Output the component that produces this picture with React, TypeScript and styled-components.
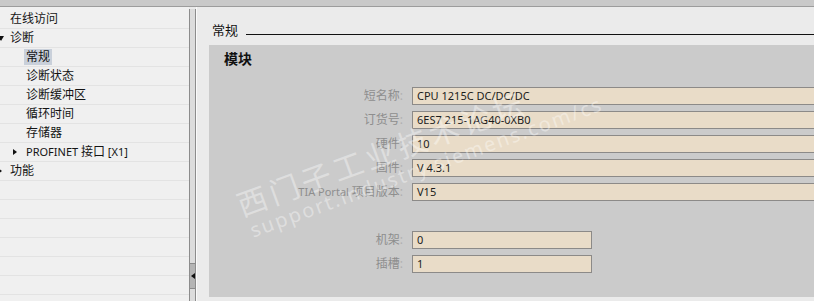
import React from "react";
import styled, { createGlobalStyle } from "styled-components";

const Global = createGlobalStyle`
  html, body { margin: 0; padding: 0; }
  body {
    width: 814px; height: 301px; overflow: hidden;
    background: #ebebeb;
    font-family: "Noto Sans", "Noto Sans CJK SC", sans-serif;
  }
`;

const Page = styled.div`
  position: relative;
  width: 814px;
  height: 301px;
  display: flex;
  flex-direction: column;
  overflow: hidden;
`;

const TopBand = styled.div`
  height: 6px;
  background: #c9c9c9;
  border-bottom: 1px solid #9c9c9c;
  flex: none;
`;

const Main = styled.div`
  flex: 1;
  display: flex;
  min-height: 0;
`;

const Tree = styled.div`
  width: 189px;
  flex: none;
  background: #f0f0f0;
  padding-top: 3px;
  overflow: hidden;
`;

const Row = styled.div<{ $indent: number }>`
  position: relative;
  height: 18px;
  border-bottom: 1px solid #e3e3e3;
  display: flex;
  align-items: center;
  padding-left: ${(p) => p.$indent}px;
  font-size: 12px;
  color: #141414;
  white-space: nowrap;
`;

const Label = styled.span<{ $selected?: boolean }>`
  padding: 0 2px;
  line-height: 16px;
  background: ${(p) => (p.$selected ? "#c9d0da" : "transparent")};
  margin-left: -2px;
`;

const Latin = styled.span`
  font-size: 11px;
`;

const Twisty = styled.span<{ $x: number; $open?: boolean }>`
  position: absolute;
  left: ${(p) => p.$x}px;
  top: 6px;
  width: 0;
  height: 0;
  ${(p) =>
    p.$open
      ? `border-left: 3.5px solid transparent; border-right: 3.5px solid transparent; border-top: 5px solid #111; top: 7px;`
      : `border-top: 3.5px solid transparent; border-bottom: 3.5px solid transparent; border-left: 4px solid #111;`}
`;

const Splitter = styled.div`
  width: 5px;
  flex: none;
  margin-top: 2px;
  background: #dcdcdc;
  border-left: 1px solid #8c8c8c;
  border-right: 1px solid #8c8c8c;
  display: flex;
  flex-direction: column;
  justify-content: flex-end;
  padding-bottom: 12px;
`;

const Grip = styled.div`
  height: 24px;
  background: #b4b4b4;
  border-top: 1px solid #8a8a8a;
  border-bottom: 1px solid #8a8a8a;
  display: flex;
  align-items: center;
  justify-content: center;
  &::after {
    content: "";
    border-top: 3px solid transparent;
    border-bottom: 3px solid transparent;
    border-right: 4px solid #111;
  }
`;

const Gap = styled.div`
  width: 1px;
  flex: none;
  background: #fafafa;
`;

const Content = styled.div`
  flex: 1;
  display: flex;
  flex-direction: column;
  background: #ebebeb;
  padding-left: 12px;
  min-width: 0;
`;

const SectionTitle = styled.div`
  height: 38px;
  display: flex;
  align-items: flex-start;
  padding-top: 13px;
  box-sizing: border-box;
  font-size: 13px;
  color: #111;
  gap: 8px;
  padding-left: 3px;
  &::after {
    content: "";
    flex: 1;
    height: 1px;
    background: #111;
    margin-top: 14px;
  }
`;

const Box = styled.div`
  height: 252px;
  background: #cbcbcb;
  display: flex;
  flex-direction: column;
`;

const BoxHeading = styled.div`
  height: 28px;
  line-height: 28px;
  padding-left: 15px;
  font-size: 14px;
  font-weight: 700;
  color: #111;
`;

const Form = styled.div<{ $mt: number }>`
  display: grid;
  grid-template-columns: 194px 1fr;
  column-gap: 9px;
  row-gap: 6px;
  margin-top: ${(p) => p.$mt}px;
`;

const FieldLabel = styled.div`
  text-align: right;
  font-size: 12px;
  color: #8e8e8e;
  line-height: 18px;
  white-space: nowrap;
`;

const Colon = styled.span`
  color: #b0b0b0;
`;

const Field = styled.div<{ $w?: number }>`
  box-sizing: border-box;
  height: 18px;
  ${(p) => (p.$w ? `width: ${p.$w}px;` : "")}
  background: #e9dcc8;
  border: 1px solid #8c8a88;
  border-right-width: ${(p) => (p.$w ? 1 : 0)}px;
  font-size: 11px;
  line-height: 16px;
  color: #1c1c1c;
  padding-left: 4px;
  white-space: nowrap;
`;

const Watermark = styled.div<{ $x: number; $y: number; $size: number; $ls: number }>`
  position: absolute;
  left: ${(p) => p.$x}px;
  top: ${(p) => p.$y}px;
  transform: rotate(-20deg);
  transform-origin: left top;
  font-size: ${(p) => p.$size}px;
  letter-spacing: ${(p) => p.$ls}px;
  color: rgba(255, 255, 255, 0.38);
  white-space: nowrap;
  pointer-events: none;
`;

type Node = { text: React.ReactNode; key: string; indent: number; twisty?: "open" | "closed"; tx?: number; selected?: boolean };

const tree: Node[] = [
  { key: "a", text: "在线访问", indent: 10 },
  { key: "b", text: "诊断", indent: 10, twisty: "open", tx: -2 },
  { key: "c", text: "常规", indent: 26, selected: true },
  { key: "d", text: "诊断状态", indent: 26 },
  { key: "e", text: "诊断缓冲区", indent: 26 },
  { key: "f", text: "循环时间", indent: 26 },
  { key: "g", text: "存储器", indent: 26 },
  {
    key: "h",
    text: (
      <>
        <Latin>PROFINET </Latin>接口<Latin> [X1]</Latin>
      </>
    ),
    indent: 26,
    twisty: "closed",
    tx: 13,
  },
  { key: "i", text: "功能", indent: 10, twisty: "closed", tx: -2 },
];

const fields: { label: React.ReactNode; key: string; value: string }[] = [
  { key: "1", label: "短名称", value: "CPU 1215C DC/DC/DC" },
  { key: "2", label: "订货号", value: "6ES7 215-1AG40-0XB0" },
  { key: "3", label: "硬件", value: "10" },
  { key: "4", label: "固件", value: "V 4.3.1" },
  {
    key: "5",
    label: (
      <>
        <Latin>TIA Portal </Latin>项目版本
      </>
    ),
    value: "V15",
  },
];

const rack = [
  { key: "r1", label: "机架", value: "0" },
  { key: "r2", label: "插槽", value: "1" },
];

export default function App() {
  return (
    <Page>
      <Global />
      <TopBand />
      <Main>
        <Tree>
          {tree.map((r) => (
            <Row key={r.key} $indent={r.indent}>
              {r.twisty && <Twisty $x={r.tx ?? 0} $open={r.twisty === "open"} />}
              <Label $selected={r.selected}>{r.text}</Label>
            </Row>
          ))}
          {Array.from({ length: 7 }).map((_, i) => (
            <Row key={"e" + i} $indent={0} />
          ))}
        </Tree>
        <Splitter>
          <Grip />
        </Splitter>
        <Gap />
        <Content>
          <SectionTitle>常规</SectionTitle>
          <Box>
            <BoxHeading>模块</BoxHeading>
            <Form $mt={14}>
              {fields.map((f) => (
                <React.Fragment key={f.key}>
                  <FieldLabel>
                    {f.label}
                    <Colon>:</Colon>
                  </FieldLabel>
                  <Field>{f.value}</Field>
                </React.Fragment>
              ))}
            </Form>
            <Form $mt={30}>
              {rack.map((f) => (
                <React.Fragment key={f.key}>
                  <FieldLabel>
                    {f.label}
                    <Colon>:</Colon>
                  </FieldLabel>
                  <Field $w={180}>{f.value}</Field>
                </React.Fragment>
              ))}
            </Form>
          </Box>
        </Content>
      </Main>
      <Watermark $x={230} $y={184} $size={30} $ls={4}>西门子工业技术论坛</Watermark>
      <Watermark $x={246} $y={218} $size={20} $ls={2}>support.industry.siemens.com/cs</Watermark>
    </Page>
  );
}
